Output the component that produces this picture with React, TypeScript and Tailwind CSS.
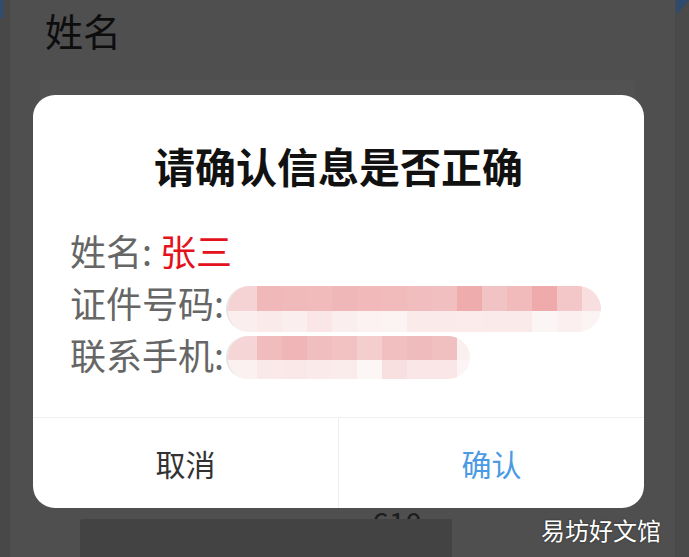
const row1Top = [
  "w-[29px] bg-[#f5d3d4]",
  "w-[25px] bg-[#f0b8b9]",
  "w-[25px] bg-[#f0b9ba]",
  "w-[25px] bg-[#f1bbbc]",
  "w-[25px] bg-[#f0b7b8]",
  "w-[25px] bg-[#f1b9ba]",
  "w-[25px] bg-[#f1bbbc]",
  "w-[25px] bg-[#f1bdbe]",
  "w-[25px] bg-[#f1bfc0]",
  "w-[25px] bg-[#eeacad]",
  "w-[25px] bg-[#f2c3c4]",
  "w-[25px] bg-[#f1bbbc]",
  "w-[25px] bg-[#efabac]",
  "w-[25px] bg-[#f3c6c7]",
  "w-[19px] bg-[#f8dede]",
];
const row1Bottom = [
  "w-[29px] bg-[#fbeeee]",
  "w-[25px] bg-[#faeaea]",
  "w-[25px] bg-[#fbeeee]",
  "w-[25px] bg-[#fae6e6]",
  "w-[25px] bg-[#fbeeee]",
  "w-[25px] bg-[#fcf2f2]",
  "w-[25px] bg-[#fcf3f3]",
  "w-[25px] bg-[#fbeaea]",
  "w-[25px] bg-[#fbeaea]",
  "w-[25px] bg-[#fbebeb]",
  "w-[25px] bg-[#fbeaea]",
  "w-[25px] bg-[#fbeaea]",
  "w-[25px] bg-[#fcf5f5]",
  "w-[25px] bg-[#fbefef]",
  "w-[19px] bg-[#fcf4f4]",
];
const row2Top = [
  "w-[29px] bg-[#f5d5d6]",
  "w-[25px] bg-[#f1bcbd]",
  "w-[25px] bg-[#f0b6b7]",
  "w-[25px] bg-[#f1bebf]",
  "w-[25px] bg-[#f2c1c2]",
  "w-[25px] bg-[#f4cdcd]",
  "w-[25px] bg-[#f1bfc0]",
  "w-[25px] bg-[#f0bbbc]",
  "w-[25px] bg-[#f0bfc0]",
  "w-[13px] bg-[#fbf0f0]",
];
const row2Bottom = [
  "w-[29px] bg-[#fcf1f1]",
  "w-[25px] bg-[#fae9e9]",
  "w-[25px] bg-[#fae8e8]",
  "w-[25px] bg-[#faeaea]",
  "w-[25px] bg-[#fbecec]",
  "w-[25px] bg-[#fdf6f6]",
  "w-[25px] bg-[#f9e0e0]",
  "w-[25px] bg-[#fae6e6]",
  "w-[25px] bg-[#fae6e6]",
  "w-[13px] bg-[#fdf5f5]",
];

function Mosaic({
  top,
  bottom,
  topH,
  bottomH,
  extra,
}: {
  top: string[];
  bottom: string[];
  topH: string;
  bottomH: string;
  extra: string;
}) {
  return (
    <div
      className={`flex flex-col overflow-hidden rounded-[24px] border-l-2 border-[#e4e4e4] ${extra}`}
    >
      <div className={`flex ${topH}`}>
        {top.map((c, i) => (
          <div key={i} className={`h-full shrink-0 ${c}`} />
        ))}
      </div>
      <div className={`flex ${bottomH}`}>
        {bottom.map((c, i) => (
          <div key={i} className={`h-full shrink-0 ${c}`} />
        ))}
      </div>
    </div>
  );
}

export default function App() {
  return (
    <div className="relative flex h-[557px] w-[689px] overflow-hidden bg-[#4f4f4f] font-['Noto_Sans_CJK_SC','Noto_Sans',sans-serif]">
      {/* left edge strip */}
      <div className="flex w-[10px] shrink-0 flex-col bg-[#484848]">
        <div className="h-[18px] w-[3px] bg-[#2f4d74]" />
      </div>

      {/* page content behind the overlay */}
      <div className="flex flex-1 flex-col">
        <div className="h-[80px] pl-[35px] pt-[11px] text-[38px] leading-[38px] text-[#0d0d0d]">
          姓名
        </div>
        <div className="ml-[30px] mr-[40px] h-[428px] rounded-[3px] bg-[#525252]" />
        <div className="relative ml-[70px] flex-1">
          <div className="absolute left-[292px] top-[-1px] text-[30px] leading-[30px] text-[#1e1e1e]">
            610
          </div>
          <div className="absolute inset-x-0 bottom-0 top-[11px] w-[372px] rounded-tl-[3px] bg-[#434343]" />
        </div>
      </div>

      {/* right edge strip */}
      <div className="w-[14px] shrink-0 bg-[#4a4a4a]">
        <svg width="14" height="16" viewBox="0 0 14 16">
          <polygon points="1,0 14,0 14,0 1,15" fill="#2f4a6c" />
        </svg>
      </div>

      {/* modal dialog */}
      <div className="absolute left-[33px] top-[95px] flex h-[413px] w-[611px] flex-col overflow-hidden rounded-[22px] bg-white">
        <div className="pt-[46px] text-center text-[41px] font-bold leading-[48px] text-[#111111]">
          请确认信息是否正确
        </div>
        <div className="mt-[35px] flex flex-col pl-[37px] text-[36px] leading-[52px] text-[#666666]">
          <div className="flex h-[52px] items-center">
            <span>姓名:</span>
            <span className="text-[#e3121c]">&nbsp;张三</span>
          </div>
          <div className="flex h-[52px] items-center">
            <span>证件号码:</span>
            <Mosaic
              top={row1Top}
              bottom={row1Bottom}
              topH="h-[25px]"
              bottomH="h-[21px]"
              extra="ml-[2px] self-start mt-[10px]"
            />
          </div>
          <div className="flex h-[52px] items-center">
            <span>联系手机:</span>
            <Mosaic
              top={row2Top}
              bottom={row2Bottom}
              topH="h-[24px]"
              bottomH="h-[19px]"
              extra="ml-[2px] self-start mt-[8px]"
            />
          </div>
        </div>
        <div className="flex-1" />
        <div className="flex h-[91px] border-t border-[#efefef]">
          <div className="flex flex-1 items-center justify-center text-[30px] text-[#333333]">
            取消
          </div>
          <div className="w-px bg-[#efefef]" />
          <div className="flex flex-1 items-center justify-center text-[30px] text-[#4a9be3]">
            确认
          </div>
        </div>
      </div>

      {/* watermark */}
      <div className="absolute right-[28px] top-[514px] text-[24px] leading-[32px] text-white [text-shadow:0_0_2px_rgba(0,0,0,0.6)]">
        易坊好文馆
      </div>
    </div>
  );
}
